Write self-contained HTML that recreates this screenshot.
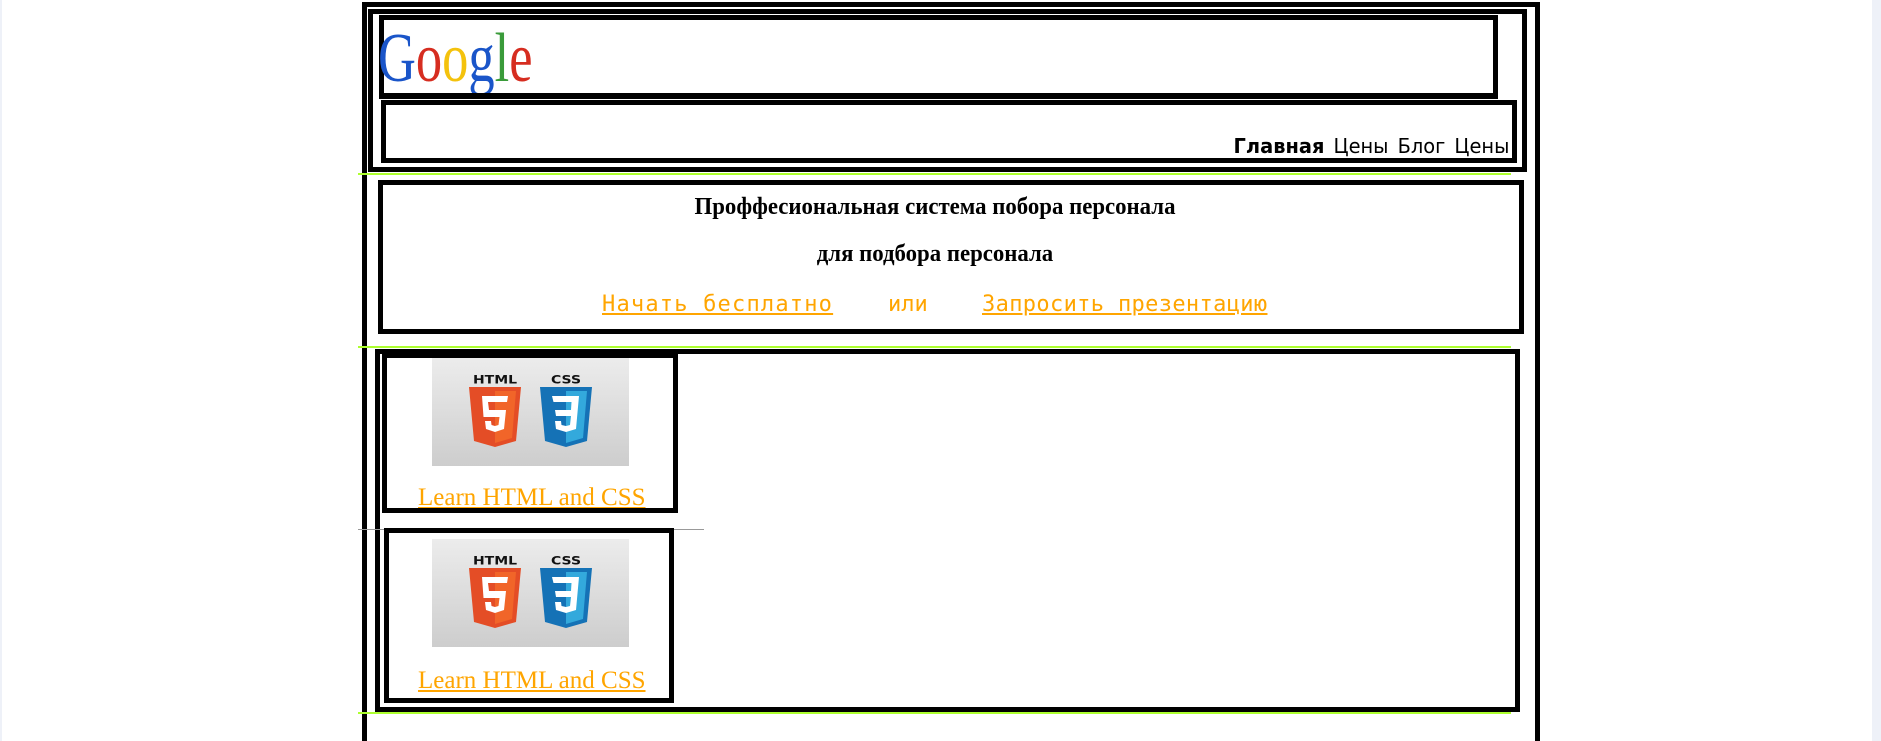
<!DOCTYPE html>
<html><head><meta charset="utf-8">
<style>
html,body{margin:0;padding:0;background:#fff;width:1881px;height:741px;overflow:hidden;position:relative}
.b{position:absolute;box-sizing:border-box;border:5px solid #000}
.g{position:absolute;height:2px;background:#adff2f}
.a{position:absolute;white-space:nowrap}
.learn{position:absolute;font-family:"Liberation Serif",serif;font-size:25px;color:#ffa500;text-decoration:underline;white-space:nowrap}
.img{position:absolute;width:197px;height:108px}
</style></head><body>
<div style="position:absolute;left:0;top:0;width:2px;height:741px;background:#eef1f8"></div>
<div style="position:absolute;left:1872px;top:0;width:9px;height:741px;background:#eef1f8"></div>

<div class="b" style="left:362px;top:2px;width:1178px;height:760px"></div>
<div class="b" style="left:368px;top:9px;width:1159px;height:163px"></div>
<div class="b" style="left:379px;top:15px;width:1119px;height:84px"></div>
<div class="a" style="left:378px;top:14px;font-family:'Liberation Serif',serif;font-size:70px;transform:scaleX(0.75);transform-origin:0 0;line-height:90px"><span style="color:#1a55c9">G</span><span style="color:#d62d20">o</span><span style="color:#f4c20d">o</span><span style="color:#1a55c9">g</span><span style="color:#3a9b3a">l</span><span style="color:#d62d20">e</span></div>
<div style="position:absolute;left:379px;top:93px;width:1119px;height:6px;background:#000"></div>
<div class="b" style="left:381px;top:100px;width:1136px;height:63px"></div>
<div class="a" style="right:372px;top:134px;font-family:'DejaVu Sans',sans-serif;font-size:20px;line-height:24px;word-spacing:3px;transform:scaleX(0.97);transform-origin:100% 0"><b>Главная</b> Цены Блог Цены</div>
<div class="g" style="left:358px;top:173px;width:1153px"></div>

<div class="b" style="left:378px;top:180px;width:1146px;height:154px"></div>
<div class="a" style="left:0;width:1870px;text-align:center;top:192px;font-family:'Liberation Serif',serif;font-weight:bold;font-size:24px;line-height:30px;transform:scaleX(0.95)">Проффесиональная система побора персонала</div>
<div class="a" style="left:0;width:1870px;text-align:center;top:239px;font-family:'Liberation Serif',serif;font-weight:bold;font-size:24px;line-height:30px;transform:scaleX(0.95)">для подбора персонала</div>
<div class="a" style="left:602px;top:292px;font-family:'DejaVu Sans Mono',monospace;font-size:22px;line-height:26px;color:#ffa500;text-decoration:underline;letter-spacing:1.2px">Начать бесплатно</div>
<div class="a" style="left:888px;top:292px;font-family:'DejaVu Sans Mono',monospace;font-size:22px;line-height:26px;color:#ffa500">или</div>
<div class="a" style="left:982px;top:292px;font-family:'DejaVu Sans Mono',monospace;font-size:22px;line-height:26px;color:#ffa500;text-decoration:underline;letter-spacing:0.35px">Запросить презентацию</div>
<div class="g" style="left:358px;top:346px;width:1153px"></div>

<div class="b" style="left:375px;top:349px;width:1145px;height:363px"></div>

<svg width="0" height="0" style="position:absolute"><defs>
<linearGradient id="gr" x1="0" y1="0" x2="0" y2="1"><stop offset="0" stop-color="#ececec"/><stop offset="1" stop-color="#cdcdcd"/></linearGradient>
<g id="logo">
<rect width="197" height="108" fill="url(#gr)"/>
<text x="63" y="26" font-family="'DejaVu Sans',sans-serif" font-weight="bold" font-size="14" text-anchor="middle" fill="#111" transform="scale(1,0.85) translate(0,4)">HTML</text>
<text x="134" y="26" font-family="'DejaVu Sans',sans-serif" font-weight="bold" font-size="14" text-anchor="middle" fill="#111" transform="scale(1,0.85) translate(0,4)">CSS</text>
<path d="M37 29h52l-5 54-21 6-21-6z" fill="#e44d26"/><path d="M63 33v52l17-5 4-47z" fill="#f16529"/>
<path d="M50 38h26l-1 6h-19l1 8h17l-2 19-9 3-9-3-1-8h6l.5 4 3.5 1 3.5-1 1-8h-16z" fill="#fff"/>
<path d="M108 29h52l-5 54-21 6-21-6z" fill="#1572b6"/><path d="M134 33v52l17-5 4-47z" fill="#33a9dc"/>
<path d="M120 38h27l-3 33-10 3-10-3-1-8h6l.5 4 4.5 1 4-1 1-9h-15l-1-6h16l.5-8h-18z" fill="#fff"/>
</g></defs></svg>

<div class="b" style="left:382px;top:353px;width:296px;height:160px"></div>
<svg class="img" style="left:432px;top:358px"><use href="#logo"/></svg>
<div class="learn" style="left:418px;top:483px;line-height:30px">Learn HTML and CSS</div>
<div style="position:absolute;left:382px;top:508px;width:296px;height:5px;background:#000"></div>

<div style="position:absolute;left:358px;top:529px;width:346px;height:1px;background:#999"></div>

<div class="b" style="left:384px;top:528px;width:290px;height:175px"></div>
<svg class="img" style="left:432px;top:539px"><use href="#logo"/></svg>
<div class="learn" style="left:418px;top:666px;line-height:30px">Learn HTML and CSS</div>

<div class="g" style="left:358px;top:712px;width:1153px"></div>
</body></html>
